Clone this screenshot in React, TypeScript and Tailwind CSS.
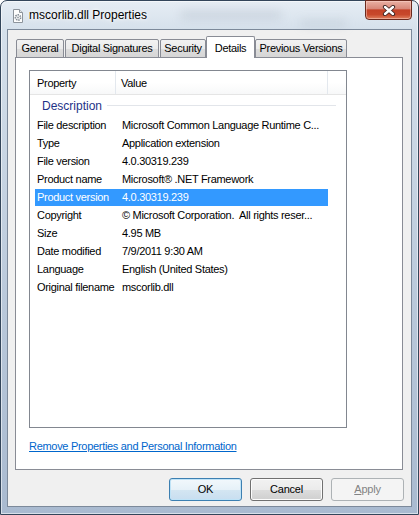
import React from 'react';

// ─── Data ─────────────────────────────────────────────────────────────────────

const rows: [string, string][] = [
  ['File description', 'Microsoft Common Language Runtime C...'],
  ['Type', 'Application extension'],
  ['File version', '4.0.30319.239'],
  ['Product name', 'Microsoft® .NET Framework'],
  ['Product version', '4.0.30319.239'],
  ['Copyright', '© Microsoft Corporation.  All rights reser...'],
  ['Size', '4.95 MB'],
  ['Date modified', '7/9/2011 9:30 AM'],
  ['Language', 'English (United States)'],
  ['Original filename', 'mscorlib.dll'],
];

const tabs = [
  { label: 'General', w: 'w-[48px]', ml: 'ml-[1px]' },
  { label: 'Digital Signatures', w: 'w-[94px]', ml: 'ml-[1px]' },
  { label: 'Security', w: 'w-[46px]', ml: 'ml-[1px]' },
  { label: 'Details', w: 'w-[49px]', ml: 'ml-0', active: true },
  { label: 'Previous Versions', w: 'w-[92px]', ml: 'ml-0' },
];

// ─── Small drawings ───────────────────────────────────────────────────────────

const FileIcon = () => (
  <svg width="12" height="14" viewBox="0 0 12 14">
    <path d="M1.5 0.5h6l3 3v10h-9z" fill="#fdfdfd" stroke="#8d949c" />
    <path d="M7.5 0.5v3h3" fill="#e4e7ea" stroke="#8d949c" />
    <circle cx="6" cy="8.5" r="2.6" fill="none" stroke="#7d8791" strokeWidth="1.6" strokeDasharray="1.4 0.9" />
    <circle cx="6" cy="8.5" r="1" fill="#9aa3ab" />
  </svg>
);

const CloseGlyph = () => (
  <svg width="14" height="11" viewBox="0 0 14 11">
    <path d="M3 2l8 7M11 2l-8 7" stroke="#3b2320" strokeWidth="4.2" strokeLinecap="round" />
    <path d="M3 2l8 7M11 2l-8 7" stroke="#ffffff" strokeWidth="2.4" strokeLinecap="round" />
  </svg>
);

// ─── Buttons ──────────────────────────────────────────────────────────────────

const Button = ({ kind, children }: { kind: 'default' | 'normal' | 'disabled'; children: React.ReactNode }) => {
  const look =
    kind === 'default'
      ? 'border-[#3c7fb1] bg-[linear-gradient(to_bottom,#f2f8fc_0%,#e6f1f8_50%,#d4e6f2_51%,#c8def0_100%)] shadow-[inset_0_0_0_1px_#bfe3f7] text-black'
      : kind === 'normal'
        ? 'border-[#707070] bg-[linear-gradient(to_bottom,#f2f2f2_0%,#ebebeb_50%,#dddddd_51%,#cfcfcf_100%)] shadow-[inset_0_0_0_1px_#fcfcfc] text-black'
        : 'border-[#adb2b5] bg-[#f4f4f4] text-[#838383]';
  return (
    <div className={`w-[73px] h-[23px] rounded-[3px] border flex items-center justify-center text-[11px] tracking-[-0.2px] ${look}`}>
      {children}
    </div>
  );
};

// ─── Main component ───────────────────────────────────────────────────────────

export default function App() {
  return (
    <div className="w-[419px] h-[515px] overflow-hidden font-['Liberation_Sans',Arial,sans-serif]">
      <div className="relative w-[419px] h-[515px] rounded-t-[7px] border border-[#33455a] bg-[linear-gradient(to_bottom,#e6edf4_0px,#d5e0eb_30px,#b9c8da_60%,#a9bad0_100%)] shadow-[inset_0_0_0_1px_rgba(255,255,255,0.55)] px-[6px] flex flex-col">
        {/* blurred glass backdrop */}
        <div className="absolute left-[180px] top-[10px] w-[100px] h-[8px] bg-[#8e9bab]/25 blur-[5px]" />
        <div className="absolute left-[300px] top-[19px] w-[45px] h-[7px] bg-[#8e9bab]/20 blur-[5px]" />

        {/* ── Title bar ── */}
        <div className="relative h-[28px] flex items-center">
          <div className="ml-[5px] mt-[1px]">
            <FileIcon />
          </div>
          <span className="ml-[5px] text-[12px] text-black [text-shadow:0_0_7px_#fff,0_0_3px_#fff]">
            mscorlib.dll Properties
          </span>
          <div className="absolute top-[-1px] right-[0px] w-[47px] h-[20px] rounded-b-[4px] border border-[#6b2a1e] bg-[linear-gradient(to_bottom,#eab1a4_0%,#d8887a_42%,#c44227_50%,#c8482b_75%,#e0805e_100%)] shadow-[inset_0_0_0_1px_rgba(255,220,210,0.45)] flex items-center justify-center">
            <CloseGlyph />
          </div>
        </div>

        {/* ── Client area ── */}
        <div className="h-[478px] border border-[#7c899a] bg-[#f0f0f0] flex flex-col">
          {/* tabs */}
          <div className="mt-[6px] ml-[7px] h-[22px] flex items-end text-[11px] tracking-[-0.3px] text-black">
            {tabs.map((t) =>
              t.active ? (
                <div
                  key={t.label}
                  className={`relative z-10 ${t.w} ${t.ml} h-[22px] border border-b-0 border-[#898c95] rounded-t-[2px] bg-white flex justify-center pt-[3px]`}
                >
                  {t.label}
                </div>
              ) : (
                <div
                  key={t.label}
                  className={`${t.w} ${t.ml} h-[19px] border border-[#898c95] rounded-t-[2px] bg-[linear-gradient(to_bottom,#f2f2f2_0%,#ebebeb_50%,#dddddd_51%,#d6d6d6_100%)] flex items-center justify-center`}
                >
                  {t.label}
                </div>
              ),
            )}
          </div>

          {/* tab panel */}
          <div className="relative mt-[-1px] ml-[7px] w-[388px] h-[413px] border border-[#898c95] bg-white flex flex-col text-[11px] tracking-[-0.3px] text-black">
            {/* list view */}
            <div className="mt-[12px] ml-[13px] w-[318px] h-[358px] border border-[#828790] bg-white flex flex-col">
              <div className="h-[24px] flex border-b border-[#e5e5e5] bg-[linear-gradient(to_bottom,#ffffff_0%,#ffffff_50%,#f7f8f9_100%)]">
                <div className="w-[86px] pl-[7px] pt-[2px] flex items-center border-r border-[#e3e8ee]">Property</div>
                <div className="w-[212px] pl-[5px] pt-[2px] flex items-center border-r border-[#e3e8ee]">Value</div>
                <div className="flex-1" />
              </div>

              <div className="h-[21px] flex items-center pl-[12px] pr-[10px]">
                <span className="text-[12px] tracking-[0px] text-[#1e3287]">Description</span>
                <div className="ml-[5px] flex-1 h-px bg-[#e2e5ea]" />
              </div>

              {rows.map(([k, v]) => {
                const sel = k === 'Product version';
                return (
                  <div key={k} className="h-[18px] flex items-end">
                    <div
                      className={`ml-[5px] w-[293px] h-[17px] flex items-center whitespace-pre ${
                        sel ? 'bg-[#3399ff] text-white' : ''
                      }`}
                    >
                      <span className="w-[87px] pl-[2px] shrink-0">{k}</span>
                      <span>{v}</span>
                    </div>
                  </div>
                );
              })}
            </div>

            <div className="mt-[11px] ml-[13px] text-[11px] text-[#0066cc] underline leading-[15px]">
              Remove Properties and Personal Information
            </div>
          </div>

          {/* dialog buttons */}
          <div className="mt-[8px] mr-[7px] flex justify-end gap-[8px]">
            <Button kind="default">OK</Button>
            <Button kind="normal">Cancel</Button>
            <Button kind="disabled">
              <span>
                <span className="underline">A</span>pply
              </span>
            </Button>
          </div>
        </div>
      </div>
    </div>
  );
}
